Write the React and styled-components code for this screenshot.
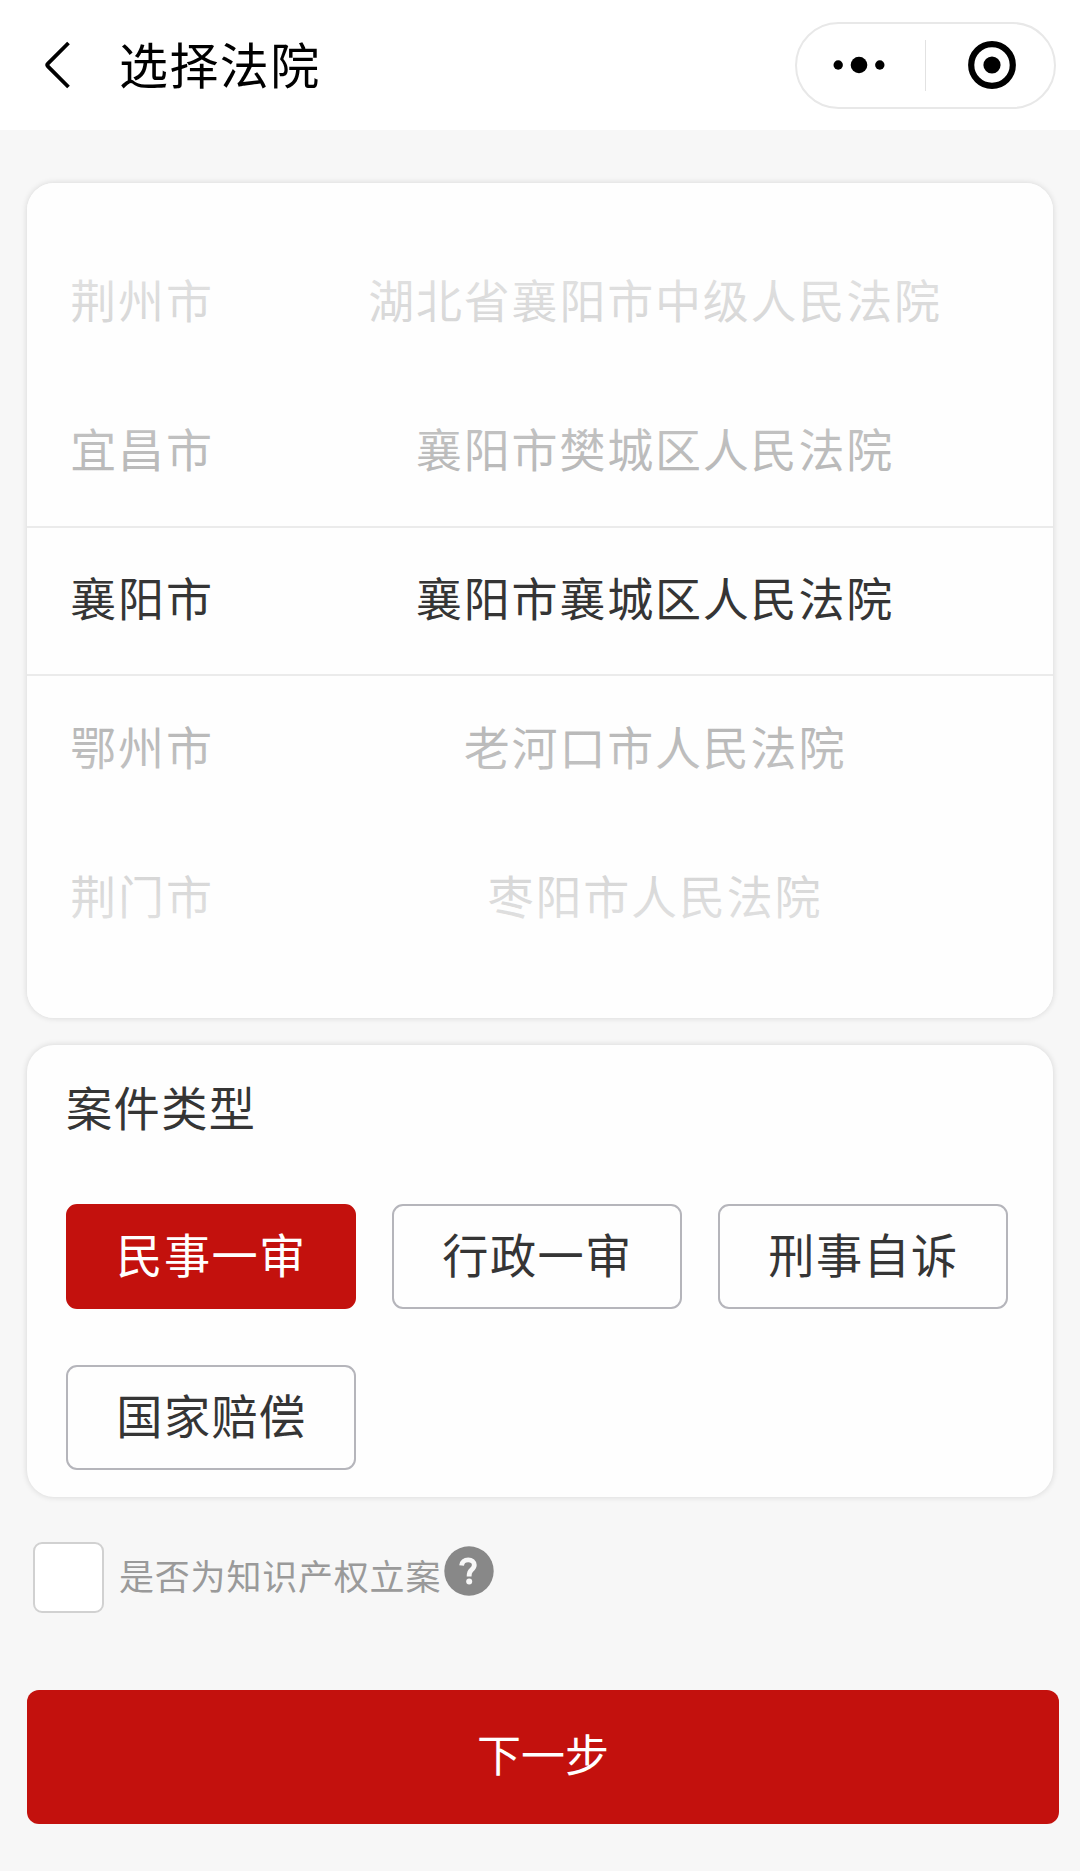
import React, { useState } from 'react'
import styled, { createGlobalStyle } from 'styled-components'

const GlobalStyle = createGlobalStyle`
  *, *::before, *::after {
    box-sizing: border-box;
  }
  body {
    margin: 0;
    background-color: #f7f7f7;
    font-family: "Noto Sans CJK SC", sans-serif;
    color: #353535;
  }
`

const Page = styled.div`
  width: 1080px;
  min-height: 1871px;
  background-color: #f7f7f7;
`

const Navbar = styled.header`
  display: flex;
  align-items: center;
  height: 130px;
  padding: 0 24px 0 43px;
  background-color: #fff;
`

const BackIcon = styled.svg`
  width: 30px;
  height: 50px;
  flex: none;
  cursor: pointer;
`

const NavTitle = styled.h1`
  flex: 1;
  margin: 0 0 0 46px;
  padding-bottom: 4px;
  font-size: 49px;
  font-weight: 400;
  letter-spacing: 1.4px;
  line-height: 60px;
  color: #000;
`

const Capsule = styled.div`
  display: flex;
  align-items: center;
  width: 261px;
  height: 87px;
  border: 2px solid #e8e8e8;
  border-radius: 44px;
`

const CapsuleButton = styled.button`
  width: 128px;
  display: flex;
  align-items: center;
  justify-content: center;
  padding: 0 ${({ $right }) => $right || 0}px 0 ${({ $left }) => $left || 0}px;
  border: none;
  background: none;
  cursor: pointer;
`

const CapsuleDivider = styled.span`
  width: 2px;
  height: 51px;
  background-color: #e2e2e2;
`

const Content = styled.main`
  display: flex;
  flex-direction: column;
  padding: 53px 27px 0;
`

const Card = styled.section`
  border-radius: 27px;
  background-color: #fefefe;
  box-shadow: 0 0 6px rgba(0, 0, 0, 0.14);
`

const Picker = styled(Card)`
  position: relative;
  display: flex;
  height: 835px;
  overflow: hidden;

  /* fade over the rows above and below the selected one */
  &::before,
  &::after {
    content: "";
    position: absolute;
    left: 0;
    right: 0;
    pointer-events: none;
  }
  &::before {
    top: 0;
    height: 345px;
    border-bottom: 2px solid #ebebeb;
    background: linear-gradient(180deg, rgba(254,254,254,0.95), rgba(254,254,254,0.6));
    background-clip: padding-box;
  }
  &::after {
    bottom: 0;
    height: 344px;
    border-top: 2px solid #ebebeb;
    background: linear-gradient(0deg, rgba(254,254,254,0.95), rgba(254,254,254,0.6));
    background-clip: padding-box;
  }
`

const PickerColumn = styled.div`
  flex: ${({ $grow }) => $grow};
  display: flex;
  flex-direction: column;
  justify-content: center;
`

const PickerItem = styled.div`
  height: 149px;
  padding: 0 0 9px 2px;
  font-size: 46px;
  letter-spacing: 1.8px;
  line-height: 140px;
  text-align: center;
  white-space: nowrap;
`

const TypeCard = styled(Card)`
  height: 452px;
  margin-top: 27px;
  padding: 29px 39px 0;
`

const TypeTitle = styled.h2`
  margin: 0;
  font-size: 46.2px;
  font-weight: 400;
  letter-spacing: 1.4px;
  line-height: 64px;
`

const TypeGrid = styled.div`
  display: grid;
  grid-template-columns: repeat(3, 290px);
  gap: 56px 36px;
  margin-top: 66px;
`

const TypeButton = styled.button`
  height: 105px;
  padding: 0 0 8px 1px;
  border: 2px solid ${({ $active }) => ($active ? '#c3110d' : '#b5b5bb')};
  border-radius: 11px;
  background-color: ${({ $active }) => ($active ? '#c3110d' : '#fefefe')};
  color: ${({ $active }) => ($active ? '#fff' : '#353535')};
  font-family: inherit;
  font-size: 46.2px;
  letter-spacing: 1.4px;
  line-height: 90px;
  cursor: pointer;
`

const CheckRow = styled.div`
  display: flex;
  align-items: center;
  height: 71px;
  margin-top: 45px;
  padding-left: 6px;
`

const CheckBox = styled.button`
  width: 71px;
  height: 71px;
  padding: 0;
  border: 2px solid #d1d1d1;
  border-radius: 9px;
  background-color: ${({ $checked }) => ($checked ? '#c3110d' : '#fff')};
  cursor: pointer;
`

const CheckLabel = styled.span`
  width: 323px;
  margin-left: 15px;
  padding-bottom: 6px;
  font-size: 35px;
  letter-spacing: 0.8px;
  line-height: 50px;
  white-space: nowrap;
  color: #9a9a9a;
`

const HelpIcon = styled.svg`
  width: 50px;
  height: 50px;
  margin: 0 0 14px 2px;
`

const NextButton = styled.button`
  width: 1032px;
  height: 134px;
  margin-top: 77px;
  padding: 0 0 8px;
  border: none;
  border-radius: 12px;
  background-color: #c3110d;
  color: #fff;
  font-family: inherit;
  font-size: 44px;
  line-height: 60px;
  cursor: pointer;
`

const cities = ['荆州市', '宜昌市', '襄阳市', '鄂州市', '荆门市']

const courts = [
  '湖北省襄阳市中级人民法院',
  '襄阳市樊城区人民法院',
  '襄阳市襄城区人民法院',
  '老河口市人民法院',
  '枣阳市人民法院',
]

const caseTypes = ['民事一审', '行政一审', '刑事自诉', '国家赔偿']

const App = () => {

  const [caseType, setCaseType] = useState(caseTypes[0])
  const [checked, setChecked] = useState(false)

  return (
    <>
    <GlobalStyle />
    <Page>
      <Navbar>
        <BackIcon viewBox="0 0 30 50" fill="none" stroke="#000" strokeWidth="3.8">
          <path d="M25.5 3 4.9 23.6a2 2 0 0 0 0 2.8L25.5 47" />
        </BackIcon>
        <NavTitle>选择法院</NavTitle>
        <Capsule>
          <CapsuleButton $right={3}>
            <svg width="52" height="18" viewBox="0 0 52 18">
              <circle cx="5.2" cy="9" r="4.7" />
              <circle cx="26" cy="9" r="8.3" />
              <circle cx="46.8" cy="9" r="4.7" />
            </svg>
          </CapsuleButton>
          <CapsuleDivider />
          <CapsuleButton $left={4}>
            <svg width="50" height="50" viewBox="0 0 50 50">
              <circle cx="25" cy="25" r="20.8" fill="none" stroke="#000" strokeWidth="6.2" />
              <circle cx="25" cy="25" r="8.6" />
            </svg>
          </CapsuleButton>
        </Capsule>
      </Navbar>
      <Content>
        <Picker>
          <PickerColumn $grow={2}>
            {cities.map((city) => <PickerItem key={city}>{city}</PickerItem>)}
          </PickerColumn>
          <PickerColumn $grow={7}>
            {courts.map((court) => <PickerItem key={court}>{court}</PickerItem>)}
          </PickerColumn>
        </Picker>
        <TypeCard>
          <TypeTitle>案件类型</TypeTitle>
          <TypeGrid>
            {caseTypes.map((type) => (
              <TypeButton key={type} $active={type === caseType} onClick={() => setCaseType(type)}>
                {type}
              </TypeButton>
            ))}
          </TypeGrid>
        </TypeCard>
        <CheckRow>
          <CheckBox $checked={checked} onClick={() => setChecked(!checked)} />
          <CheckLabel>是否为知识产权立案</CheckLabel>
          <HelpIcon viewBox="0 0 50 50" fill="none">
            <circle cx="25" cy="25" r="24.7" fill="#888" />
            <path
              d="M17.6 19.5c.3-3.6 3-5.6 6.6-5.6s6.1 2 6.1 5.2c0 2.600-1.500 3.800-3 5-1.600 1.300-2.200 2.500-2.200 6.300"
              stroke="#f7f7f7"
              strokeWidth="4.8"
            />
            <circle cx="25.2" cy="35.5" r="3" fill="#f7f7f7" />
          </HelpIcon>
        </CheckRow>
        <NextButton>下一步</NextButton>
      </Content>
    </Page>
    </>
  )
}

export default App
